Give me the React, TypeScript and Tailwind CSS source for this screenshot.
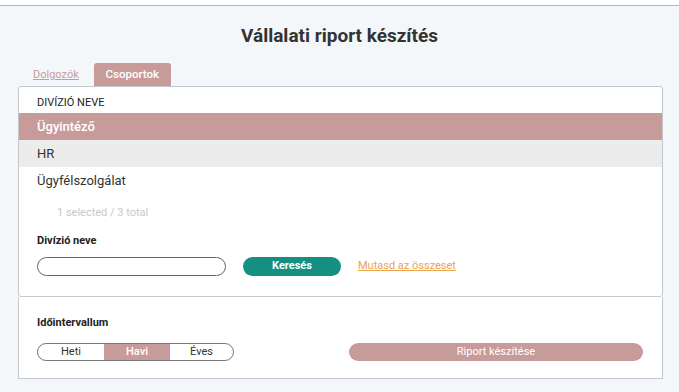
import React from "react";

export default function App() {
  return (
    <div className="w-[679px] h-[392px] bg-[#f4f7f9] overflow-hidden" style={{ fontFamily: "Roboto, 'Noto Sans', sans-serif" }}>
      <div className="h-[6px] bg-white border-b border-[#b4b8bd]" />
      <h1 className="text-center text-[19px] font-bold text-[#333333] mt-[18px] leading-[24px]">Vállalati riport készítés</h1>
      <div className="flex items-end pl-[33px] mt-[15px] h-[23px] gap-[15px]">
        <span className="text-[11px] text-[#c59c9c] underline mb-[5px] leading-[13px]">Dolgozók</span>
        <span className="bg-[#c89b9b] text-white text-[11.5px] font-medium w-[77px] h-[23px] flex items-center justify-center rounded-t-[3px]">Csoportok</span>
      </div>
      <div className="ml-[18px] w-[645px] bg-white border border-[#c4c7cb] rounded-[3px] h-[211px]">
        <div className="h-[26px] flex items-end pb-[3px] pl-[18px] text-[11px] text-[#222] leading-[14px]">DIVÍZIÓ NEVE</div>
        <div className="h-[27px] bg-[#c89b9b] flex items-center pl-[18px] text-[13px] font-medium text-white">Ügyintéző</div>
        <div className="h-[27px] bg-[#ececec] flex items-center pl-[18px] text-[13px] text-[#333]">HR</div>
        <div className="h-[27px] bg-white flex items-center pl-[18px] text-[13px] text-[#333]">Ügyfélszolgálat</div>
        <div className="h-[36px] flex items-center pl-[38px] pt-[3px] text-[11px] text-[#c8c8c8]">1 selected / 3 total</div>
        <div className="h-[22px] flex items-center pl-[18px] pt-[1px] text-[11px] font-bold text-[#222]">Divízió neve</div>
        <div className="flex items-center pl-[18px] mt-[5px] h-[19px]">
          <div className="w-[189px] h-[19px] border border-[#666] rounded-full bg-white" />
          <button className="ml-[17px] w-[98px] h-[19px] rounded-full bg-[#158f7f] text-white text-[11px] font-bold flex items-center justify-center">Keresés</button>
          <a className="ml-[17px] text-[11px] text-[#eda34a] underline">Mutasd az összeset</a>
        </div>
      </div>
      <div className="ml-[18px] w-[645px] bg-white border border-[#c4c7cb] border-t-0 h-[82px]">
        <div className="pt-[19px] h-[36px] pl-[18px] text-[11px] font-bold text-[#222] leading-[14px]">Időintervallum</div>
        <div className="flex items-center pl-[18px] mt-[10px] h-[18px]">
          <div className="w-[197px] h-[18px] border border-[#777] rounded-full flex overflow-hidden text-[11px]">
            <div className="w-[66px] flex items-center justify-center text-[#333]">Heti</div>
            <div className="w-[66px] flex items-center justify-center bg-[#c89b9b] text-white font-medium">Havi</div>
            <div className="flex-1 flex items-center justify-center text-[#333]">Éves</div>
          </div>
          <button className="ml-[115px] w-[294px] h-[18px] rounded-full bg-[#c89b9b] text-white text-[11px] flex items-center justify-center">Riport készítése</button>
        </div>
      </div>
    </div>
  );
}
